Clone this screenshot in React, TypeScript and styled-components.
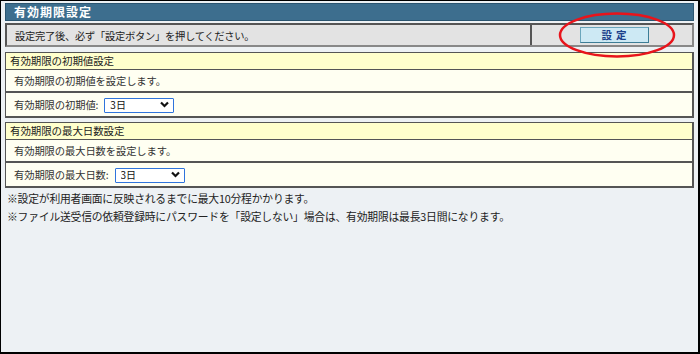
import React from "react";
import styled, { createGlobalStyle } from "styled-components";

const Global = createGlobalStyle`
  html, body { margin: 0; padding: 0; background: #fff; }
  * { box-sizing: border-box; }
`;

const FONT = `"Noto Sans CJK JP", "Noto Sans", sans-serif`;

const Page = styled.div`
  position: relative;
  width: 700px;
  height: 354px;
  background: #edf1f4;
  border-style: solid;
  border-color: #000;
  border-width: 1px 2px 2px 1px;
  padding: 2px 4px 0 4px;
  font-family: ${FONT};
  color: #222;
`;

const TitleBar = styled.div`
  height: 18px;
  background: #3d6e8e;
  border: 1px solid #2b5570;
  color: #fff;
  font-weight: bold;
  font-size: 12px;
  letter-spacing: 1px;
  line-height: 16px;
  padding-left: 8px;
`;

const NoticeBox = styled.div`
  margin-top: 2px;
  height: 24px;
  display: grid;
  grid-template-columns: 1fr 162px;
  background: #e3e3e3;
  border: 2px solid #555;
  border-right-color: #888;
  border-bottom-color: #888;
`;

const NoticeText = styled.div`
  display: flex;
  align-items: center;
  padding-left: 8px;
  font-size: 10.3px;
  letter-spacing: -0.3px;
`;

const ButtonCell = styled.div`
  display: flex;
  align-items: center;
  justify-content: center;
  border-left: 2px solid #555;
  padding-left: 4px;
`;

const SetButton = styled.button`
  width: 69px;
  height: 16px;
  padding: 0;
  background: #cde9f4;
  border: 1px solid #6aa6bc;
  border-right-color: #3c7d96;
  border-bottom-color: #3c7d96;
  color: #1b3f8a;
  font-family: ${FONT};
  font-weight: bold;
  font-size: 10.5px;
  line-height: 14px;
  letter-spacing: 4px;
  text-indent: 4px;
`;

const Section = styled.div<{ $gap: number }>`
  margin-top: ${(p) => p.$gap}px;
  border: 2px solid #555;
  border-top-width: 1px;
  border-left-width: 1px;
  background: #fffff2;
`;

const SectionHead = styled.div`
  height: 17px;
  background: #ffffcc;
  font-size: 10.5px;
  letter-spacing: -0.1px;
  line-height: 16px;
  padding-left: 4px;
  border-bottom: 1px solid #555;
`;

const Row = styled.div<{ $last?: boolean }>`
  height: 23px;
  display: flex;
  align-items: center;
  gap: 6px;
  padding-left: 8px;
  font-size: 10.3px;
  letter-spacing: -0.1px;
  color: #333;
  border-bottom: ${(p) => (p.$last ? "none" : "2px solid #555")};
`;

const SelectWrap = styled.span`
  position: relative;
  display: inline-block;
  width: 70px;
  height: 15px;
`;

const Select = styled.select`
  appearance: none;
  -webkit-appearance: none;
  width: 100%;
  height: 100%;
  border: 1.5px solid #2f74dc;
  border-radius: 1px;
  background: #fff;
  font-family: ${FONT};
  font-size: 10px;
  padding: 0 0 0 5px;
  color: #111;
  line-height: 12px;
  outline: none;
`;

const Chevron = styled.svg`
  position: absolute;
  right: 5px;
  top: 4px;
  width: 9px;
  height: 7px;
  pointer-events: none;
`;

const Notes = styled.div`
  margin-top: 3px;
  padding-left: 2px;
  display: flex;
  flex-direction: column;
  gap: 4px;
  font-size: 10.8px;
  letter-spacing: -0.2px;
  line-height: 14px;
  color: #222;
`;

const Ellipse = styled.svg`
  position: absolute;
  left: 557px;
  top: 11px;
  width: 118px;
  height: 46px;
  pointer-events: none;
`;

function DaySelect() {
  return (
    <SelectWrap>
      <Select defaultValue="3">
        <option value="3">3日</option>
        <option value="7">7日</option>
      </Select>
      <Chevron viewBox="0 0 9 7">
        <path d="M1 1.5 L4.5 5 L8 1.5" fill="none" stroke="#111" strokeWidth="2.2" />
      </Chevron>
    </SelectWrap>
  );
}

export default function App() {
  return (
    <>
      <Global />
      <Page>
        <TitleBar>有効期限設定</TitleBar>
        <NoticeBox>
          <NoticeText>設定完了後、必ず「設定ボタン」を押してください。</NoticeText>
          <ButtonCell>
            <SetButton>設定</SetButton>
          </ButtonCell>
        </NoticeBox>

        <Section $gap={5}>
          <SectionHead>有効期限の初期値設定</SectionHead>
          <Row>有効期限の初期値を設定します。</Row>
          <Row $last>
            <span>有効期限の初期値:</span>
            <DaySelect />
          </Row>
        </Section>

        <Section $gap={4}>
          <SectionHead>有効期限の最大日数設定</SectionHead>
          <Row>有効期限の最大日数を設定します。</Row>
          <Row $last>
            <span>有効期限の最大日数:</span>
            <DaySelect />
          </Row>
        </Section>

        <Notes>
          <div>※設定が利用者画面に反映されるまでに最大10分程かかります。</div>
          <div>※ファイル送受信の依頼登録時にパスワードを「設定しない」場合は、有効期限は最長3日間になります。</div>
        </Notes>

        <Ellipse viewBox="0 0 118 46">
          <ellipse cx="59" cy="23" rx="57" ry="21.5" fill="none" stroke="#e8141b" strokeWidth="2.5" />
        </Ellipse>
      </Page>
    </>
  );
}
